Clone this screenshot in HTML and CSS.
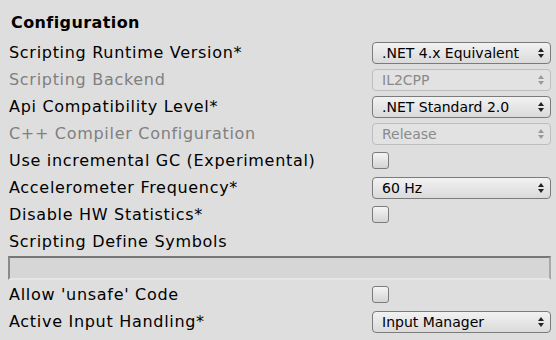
FILE: index.html
```html
<!DOCTYPE html>
<html lang="en">

<head>
    <meta charset="UTF-8">
    <title>Configuration</title>
    <link rel="stylesheet" href="styles.css">
</head>

<body>
    <div class="panel">
        <h1 class="title">Configuration</h1>

        <div class="row">
            <span class="label">Scripting Runtime Version*</span>
            <div class="select"><span>.NET 4.x Equivalent</span><i class="arrows"></i></div>
        </div>
        <div class="row disabled">
            <span class="label">Scripting Backend</span>
            <div class="select"><span>IL2CPP</span><i class="arrows"></i></div>
        </div>
        <div class="row">
            <span class="label">Api Compatibility Level*</span>
            <div class="select"><span>.NET Standard 2.0</span><i class="arrows"></i></div>
        </div>
        <div class="row disabled">
            <span class="label">C++ Compiler Configuration</span>
            <div class="select"><span>Release</span><i class="arrows"></i></div>
        </div>
        <div class="row">
            <span class="label">Use incremental GC (Experimental)</span>
            <div class="check"></div>
        </div>
        <div class="row">
            <span class="label">Accelerometer Frequency*</span>
            <div class="select"><span>60 Hz</span><i class="arrows"></i></div>
        </div>
        <div class="row">
            <span class="label">Disable HW Statistics*</span>
            <div class="check"></div>
        </div>
        <div class="row">
            <span class="label">Scripting Define Symbols</span>
        </div>
        <div class="field"></div>
        <div class="row">
            <span class="label">Allow 'unsafe' Code</span>
            <div class="check"></div>
        </div>
        <div class="row">
            <span class="label">Active Input Handling*</span>
            <div class="select"><span>Input Manager</span><i class="arrows"></i></div>
        </div>
    </div>
</body>

</html>
```

FILE: styles.css
```css
body {
    margin: 0;
    padding: 0;
    background-color: #dedede;
    font-family: "DejaVu Sans", Verdana, sans-serif;
    color: #000;
}

.panel {
    padding: 12px 5px 0 9px;
}

.title {
    font-size: 16px;
    font-weight: bold;
    letter-spacing: 0.4px;
    margin: 0 0 0 2px;
    height: 27px;
    line-height: 22px;
}

.row {
    display: flex;
    align-items: center;
    height: 27px;
    font-size: 16px;
}

.label {
    width: 363px;
    white-space: nowrap;
    letter-spacing: 0.7px;
}

.disabled .label {
    color: #808080;
}

.select {
    box-sizing: border-box;
    width: 179px;
    height: 22px;
    display: flex;
    align-items: center;
    justify-content: space-between;
    padding: 0 6px 0 9px;
    border: 1px solid #7b7b7b;
    border-radius: 4px;
    background: linear-gradient(#f2f2f2, #dadada);
    font-size: 14px;
}

.disabled .select {
    border-color: #bdbdbd;
    color: #8a8a8a;
    background: #e2e2e2;
}

.arrows {
    position: relative;
    width: 6px;
    height: 10px;
}

.arrows::before,
.arrows::after {
    content: "";
    position: absolute;
    left: 0;
    border-left: 3px solid transparent;
    border-right: 3px solid transparent;
}

.arrows::before {
    top: 0;
    border-bottom: 4px solid #222;
}

.arrows::after {
    bottom: 0;
    border-top: 4px solid #222;
}

.disabled .arrows::before {
    border-bottom-color: #9a9a9a;
}

.disabled .arrows::after {
    border-top-color: #9a9a9a;
}

.check {
    box-sizing: border-box;
    width: 17px;
    height: 17px;
    border: 1px solid #7b7b7b;
    border-radius: 3px;
    background: linear-gradient(#f4f4f4, #d4d4d4);
}

.field {
    box-sizing: border-box;
    height: 24px;
    margin: 1px 0 1px -1px;
    border: 2px solid #a8a8a8;
    border-top-color: #777;
    border-left-color: #8a8a8a;
    border-bottom-color: #e6e6e6;
    background-color: #d6d6d6;
}
```
